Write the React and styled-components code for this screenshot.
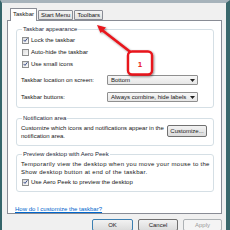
import React from 'react'
import styled, { createGlobalStyle } from 'styled-components'

const Global = createGlobalStyle`
  body { margin: 0; background: #fff; }
  * { box-sizing: border-box; }
`

const Frame = styled.div`
  position: relative;
  width: 230px;
  height: 230px;
  overflow: hidden;
  background: #f0f0f0;
  border-left: 2px solid #35656a;
  border-right: 4px solid #3a686c;
  border-top: 3px solid #a7b3bb;
  padding: 5px 4px 0 5px;
  font-family: 'Liberation Sans', Arial, sans-serif;
  font-size: 6px;
  color: #151515;
  display: flex;
  flex-direction: column;
`

const TabStrip = styled.div`
  display: flex;
  align-items: flex-end;
  padding-left: 3px;
  height: 12px;
  position: relative;
  z-index: 2;
`

const Tab = styled.div`
  height: ${p => (p.active ? '13px' : '10px')};
  margin-bottom: ${p => (p.active ? '-1px' : '0')};
  padding: ${p => (p.active ? '2px 2px 0' : '1px 2px 0')};
  margin-left: ${p => (p.first ? '0' : '1px')};
  background: ${p => (p.active ? '#fff' : 'linear-gradient(#f4f4f4, #e1e1e1)')};
  border: 1px solid #898c95;
  border-bottom: ${p => (p.active ? 'none' : '1px solid #898c95')};
  border-radius: 1px 1px 0 0;
  line-height: 7px;
  white-space: nowrap;
`

const Panel = styled.div`
  background: #fff;
  border: 1px solid #898c95;
  height: 198px;
  padding: 4px 7px 0 8px;
  display: flex;
  flex-direction: column;
`

const Group = styled.fieldset`
  margin: 0 0 ${p => p.gap || 4}px 0;
  padding: 1px 4px ${p => p.bottom || 4}px 5px;
  border: 1px solid #d5dfe5;
  border-radius: 3px;
  min-width: 0;
`

const Legend = styled.legend`
  padding: 0 1px;
  margin-left: 0;
  line-height: 8px;
  color: #1e2a3a;
`

const CheckRow = styled.div`
  display: flex;
  align-items: center;
  gap: 2px;
  height: 12px;
`

const Box = styled.span`
  width: 7px;
  height: 7px;
  border: 1px solid #8e8f8f;
  background: linear-gradient(135deg, #dcdcdc, #fbfbfb);
  display: flex;
  align-items: center;
  justify-content: center;
  flex-shrink: 0;
`

const FieldRow = styled.div`
  display: flex;
  align-items: center;
  height: 12px;
  margin-top: ${p => p.top || 0}px;
  margin-left: -1px;
`

const FieldLabel = styled.span`
  width: 86px;
  white-space: nowrap;
`

const Select = styled.div`
  width: 91px;
  height: 10px;
  border: 1px solid #8f8f8f;
  border-radius: 1px;
  background: linear-gradient(#f7f7f7, #e6e6e6);
  display: flex;
  align-items: center;
  justify-content: space-between;
  padding: 0 2px 0 3px;
  line-height: 8px;
  white-space: nowrap;
`

const Para = styled.div`
  line-height: 7.5px;
  margin-left: -1px;
  margin-top: ${p => p.top || 0}px;
  letter-spacing: ${p => p.spread || 0}px;
  white-space: nowrap;
`

const NotifyRow = styled.div`
  display: flex;
  align-items: flex-start;
  justify-content: space-between;
  padding-top: 2px;
  padding-right: 2px;
`

const Button = styled.div`
  width: ${p => p.w || 40}px;
  height: 12px;
  border: 1px solid ${p => (p.focus ? '#3c7fb1' : p.disabled ? '#adb2b5' : '#707070')};
  border-radius: 2px;
  background: ${p => (p.disabled ? '#f4f4f4' : 'linear-gradient(#f2f2f2, #dcdcdc)')};
  color: ${p => (p.disabled ? '#9a9a9a' : '#1b1b1b')};
  display: flex;
  align-items: center;
  justify-content: center;
  line-height: 8px;
  flex-shrink: 0;
  white-space: nowrap;
`

const Link = styled.a`
  color: #0066cc;
  text-decoration: underline;
  margin-top: 9px;
  margin-left: -1px;
  line-height: 8px;
`

const Footer = styled.div`
  display: flex;
  justify-content: flex-end;
  gap: 5px;
  padding-top: 5px;
`

const Callout = styled.svg`
  position: absolute;
  left: 0;
  top: 0;
  pointer-events: none;
  z-index: 5;
`

const Check = ({ checked, children }) => (
  <CheckRow>
    <Box>
      {checked && (
        <svg width="6" height="6" viewBox="0 0 6 6">
          <path d="M0.8 3 L2.4 4.7 L5.3 0.9" fill="none" stroke="#3b4f8a" strokeWidth="1.2" />
        </svg>
      )}
    </Box>
    <span>{children}</span>
  </CheckRow>
)

const Caret = () => (
  <svg width="5" height="3" viewBox="0 0 5 3">
    <path d="M0 0 H5 L2.5 3 Z" fill="#222" />
  </svg>
)

export default function App() {
  return (
    <>
      <Global />
      <Frame>
        <TabStrip>
          <Tab active first>Taskbar</Tab>
          <Tab>Start Menu</Tab>
          <Tab>Toolbars</Tab>
        </TabStrip>
        <Panel>
          <Group gap={6}>
            <Legend>Taskbar appearance</Legend>
            <Check checked>Lock the taskbar</Check>
            <Check>Auto-hide the taskbar</Check>
            <Check checked>Use small icons</Check>
            <FieldRow top={4}>
              <FieldLabel>Taskbar location on screen:</FieldLabel>
              <Select>Bottom<Caret /></Select>
            </FieldRow>
            <FieldRow top={5}>
              <FieldLabel>Taskbar buttons:</FieldLabel>
              <Select>Always combine, hide labels<Caret /></Select>
            </FieldRow>
          </Group>
          <Group gap={4} bottom={5}>
            <Legend>Notification area</Legend>
            <NotifyRow>
              <Para>
                Customize which icons and notifications appear in the
                <br />
                notification area.
              </Para>
              <Button w={40}>Customize...</Button>
            </NotifyRow>
          </Group>
          <Group bottom={3}>
            <Legend>Preview desktop with Aero Peek</Legend>
            <Para top={2} spread={0.3}>
              Temporarily view the desktop when you move your mouse to the
              <br />
              Show desktop button at end of the taskbar.
            </Para>
            <Check checked>Use Aero Peek to preview the desktop</Check>
          </Group>
          <Link href="#">How do I customize the taskbar?</Link>
        </Panel>
        <Footer>
          <Button w={41} focus>OK</Button>
          <Button w={40}>Cancel</Button>
          <Button w={39} disabled>Apply</Button>
        </Footer>
        <Callout width="230" height="230" viewBox="0 0 230 230">
          <defs>
            <filter id="sh" x="-20%" y="-20%" width="140%" height="140%">
              <feDropShadow dx="1" dy="1" stdDeviation="0.8" floodColor="#000" floodOpacity="0.45" />
            </filter>
          </defs>
          <g filter="url(#sh)">
            <line x1="131" y1="51" x2="100" y2="27" stroke="#e8141b" strokeWidth="2.6" />
            <path d="M95 22 L104 24.5 L98.5 30 Z" fill="#e8141b" />
            <rect x="126" y="48.5" width="24" height="23" rx="4" fill="#fff" stroke="#e8141b" strokeWidth="2.4" />
          </g>
          <text x="138" y="64" textAnchor="middle" fontFamily="Liberation Sans, Arial, sans-serif" fontSize="8" fontWeight="bold" fill="#e8141b">1</text>
        </Callout>
      </Frame>
    </>
  )
}
